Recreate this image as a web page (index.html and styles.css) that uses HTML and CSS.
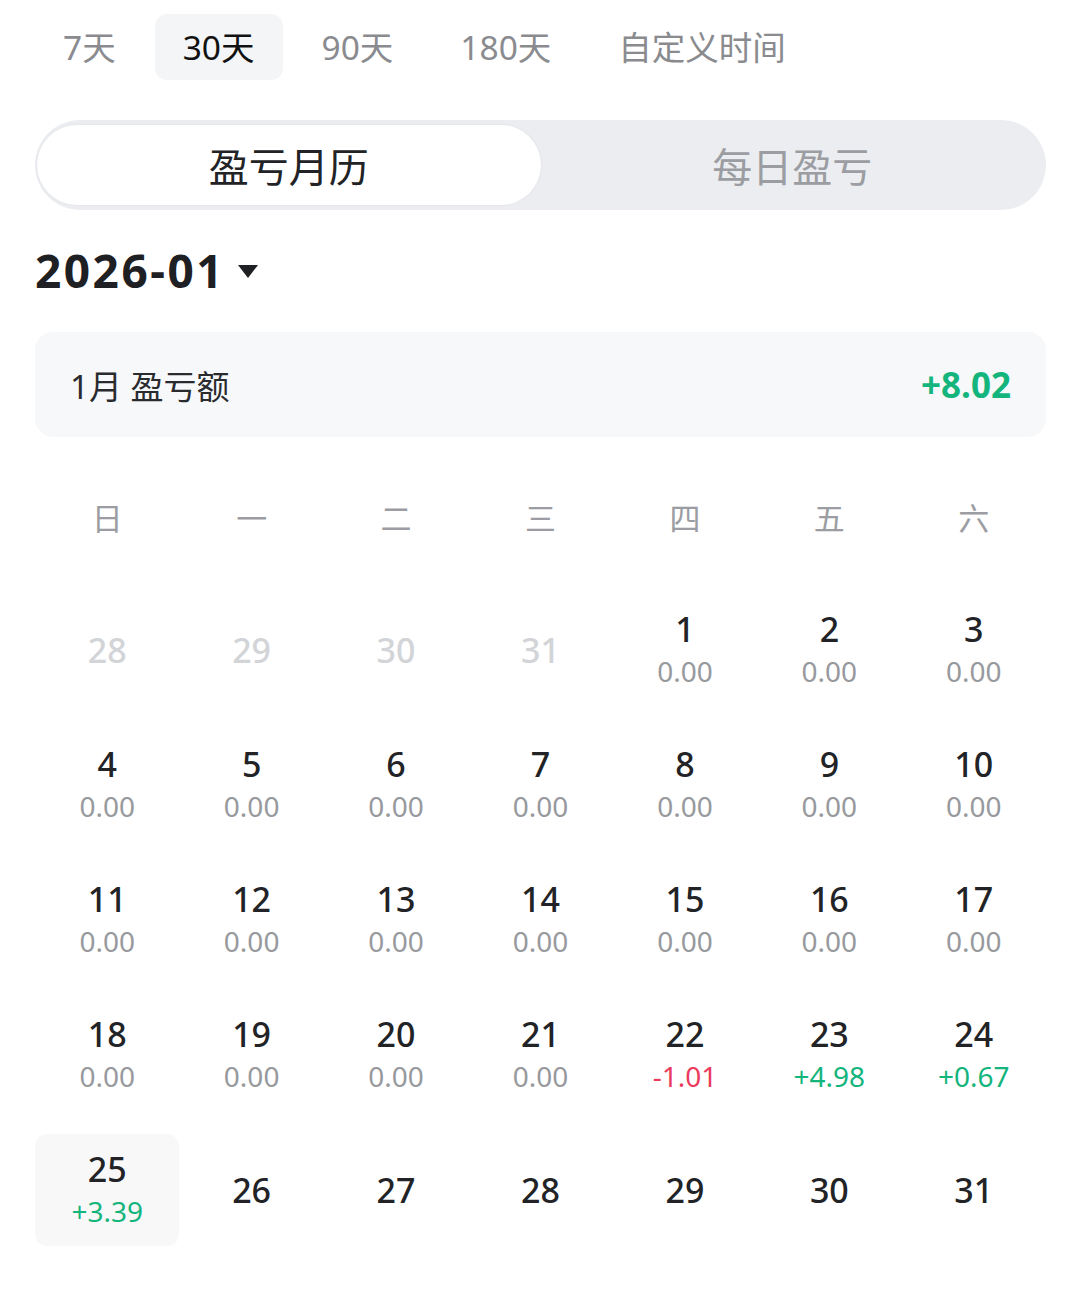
FILE: index.html
```html
<!DOCTYPE html>
<html lang="zh-CN">

<head>
    <meta charset="UTF-8">
    <meta name="viewport" content="width=device-width, initial-scale=1.0">
    <title>盈亏月历</title>

    <link rel="stylesheet" href="styles.css">
</head>

<body>
    <div class="page">
        <div class="periods">
            <span class="period">7天</span>
            <span class="period active">30天</span>
            <span class="period">90天</span>
            <span class="period">180天</span>
            <span class="period">自定义时间</span>
        </div>

        <div class="segment">
            <div class="segment-item active">盈亏月历</div>
            <div class="segment-item">每日盈亏</div>
        </div>

        <div class="month-title">
            <span>2026-01</span>
            <svg class="caret" width="22" height="16" viewBox="0 0 22 16">
                <path d="M1 2 L21 2 L11 15 Z" fill="#1f2023" />
            </svg>
        </div>

        <div class="summary">
            <span class="summary-label">1月 盈亏额</span>
            <span class="summary-value up">+8.02</span>
        </div>

        <div class="weekdays">
            <span>日</span>
            <span>一</span>
            <span>二</span>
            <span>三</span>
            <span>四</span>
            <span>五</span>
            <span>六</span>
        </div>

        <div class="calendar">
            <div class="day other"><span class="date">28</span></div>
            <div class="day other"><span class="date">29</span></div>
            <div class="day other"><span class="date">30</span></div>
            <div class="day other"><span class="date">31</span></div>
            <div class="day"><span class="date">1</span><span class="value">0.00</span></div>
            <div class="day"><span class="date">2</span><span class="value">0.00</span></div>
            <div class="day"><span class="date">3</span><span class="value">0.00</span></div>

            <div class="day"><span class="date">4</span><span class="value">0.00</span></div>
            <div class="day"><span class="date">5</span><span class="value">0.00</span></div>
            <div class="day"><span class="date">6</span><span class="value">0.00</span></div>
            <div class="day"><span class="date">7</span><span class="value">0.00</span></div>
            <div class="day"><span class="date">8</span><span class="value">0.00</span></div>
            <div class="day"><span class="date">9</span><span class="value">0.00</span></div>
            <div class="day"><span class="date">10</span><span class="value">0.00</span></div>

            <div class="day"><span class="date">11</span><span class="value">0.00</span></div>
            <div class="day"><span class="date">12</span><span class="value">0.00</span></div>
            <div class="day"><span class="date">13</span><span class="value">0.00</span></div>
            <div class="day"><span class="date">14</span><span class="value">0.00</span></div>
            <div class="day"><span class="date">15</span><span class="value">0.00</span></div>
            <div class="day"><span class="date">16</span><span class="value">0.00</span></div>
            <div class="day"><span class="date">17</span><span class="value">0.00</span></div>

            <div class="day"><span class="date">18</span><span class="value">0.00</span></div>
            <div class="day"><span class="date">19</span><span class="value">0.00</span></div>
            <div class="day"><span class="date">20</span><span class="value">0.00</span></div>
            <div class="day"><span class="date">21</span><span class="value">0.00</span></div>
            <div class="day"><span class="date">22</span><span class="value down">-1.01</span></div>
            <div class="day"><span class="date">23</span><span class="value up">+4.98</span></div>
            <div class="day"><span class="date">24</span><span class="value up">+0.67</span></div>

            <div class="day today"><span class="date">25</span><span class="value up">+3.39</span></div>
            <div class="day"><span class="date">26</span></div>
            <div class="day"><span class="date">27</span></div>
            <div class="day"><span class="date">28</span></div>
            <div class="day"><span class="date">29</span></div>
            <div class="day"><span class="date">30</span></div>
            <div class="day"><span class="date">31</span></div>
        </div>
    </div>
</body>

</html>
```

FILE: styles.css
```css
body {
    margin: 0;
    background-color: #ffffff;
    font-family: 'Noto Sans', 'Noto Sans CJK SC', sans-serif;
    color: #1f2023;
}

.page {
    padding: 14px 34px 0 35px;
}

/* period tabs */
.periods {
    display: flex;
    gap: 11px;
}

.period {
    height: 66px;
    line-height: 66px;
    padding: 0 28px;
    border-radius: 12px;
    font-size: 33.5px;
    color: #8a8b8f;
}

.period.active {
    background-color: #f4f5f7;
    color: #111111;
}

/* segmented control */
.segment {
    margin-top: 40px;
    height: 90px;
    box-sizing: border-box;
    padding: 5px 2px;
    display: flex;
    background-color: #ebedf0;
    border-radius: 45px;
}

.segment-item {
    flex: 1;
    display: flex;
    align-items: center;
    justify-content: center;
    font-size: 40px;
    color: #9b9da2;
    border-radius: 40px;
}

.segment-item.active {
    background-color: #ffffff;
    color: #222326;
    box-shadow: 0 0 3px rgba(0, 0, 0, 0.06);
}

/* month */
.month-title {
    margin-top: 30px;
    height: 60px;
    display: flex;
    align-items: center;
    gap: 12px;
    font-size: 46px;
    font-weight: 700;
    letter-spacing: 2.5px;
}

.caret {
    margin-top: 2px;
}

.summary {
    margin-top: 32px;
    height: 105px;
    box-sizing: border-box;
    padding: 0 35px;
    display: flex;
    align-items: center;
    justify-content: space-between;
    background-color: #f7f8fa;
    border-radius: 18px;
}

.summary-label {
    font-size: 33px;
    color: #2a2b2f;
}

.summary-value {
    font-size: 35px;
    font-weight: 700;
}

.up {
    color: #14b57d;
}

.down {
    color: #ea3b5d;
}

/* calendar */
.weekdays {
    margin-top: 39px;
    height: 80px;
    display: grid;
    grid-template-columns: repeat(7, 1fr);
    align-items: center;
    text-align: center;
    font-size: 31px;
    color: #9b9da2;
}

.calendar {
    margin-top: 38px;
    display: grid;
    grid-template-columns: repeat(7, 1fr);
    grid-auto-rows: 112px;
    row-gap: 23px;
}

.day {
    display: flex;
    flex-direction: column;
    align-items: center;
    justify-content: center;
    border-radius: 12px;
}

.day .date {
    font-size: 34px;
    line-height: 42px;
    font-weight: 500;
    color: #222326;
}

.day .value {
    font-size: 28px;
    line-height: 42px;
    color: #97999d;
}

.day .value.up {
    color: #14b57d;
}

.day .value.down {
    color: #ea3b5d;
}

.day.other .date {
    color: #d2d4d8;
}

.day.today {
    background-color: #f8f8f9;
}
```
